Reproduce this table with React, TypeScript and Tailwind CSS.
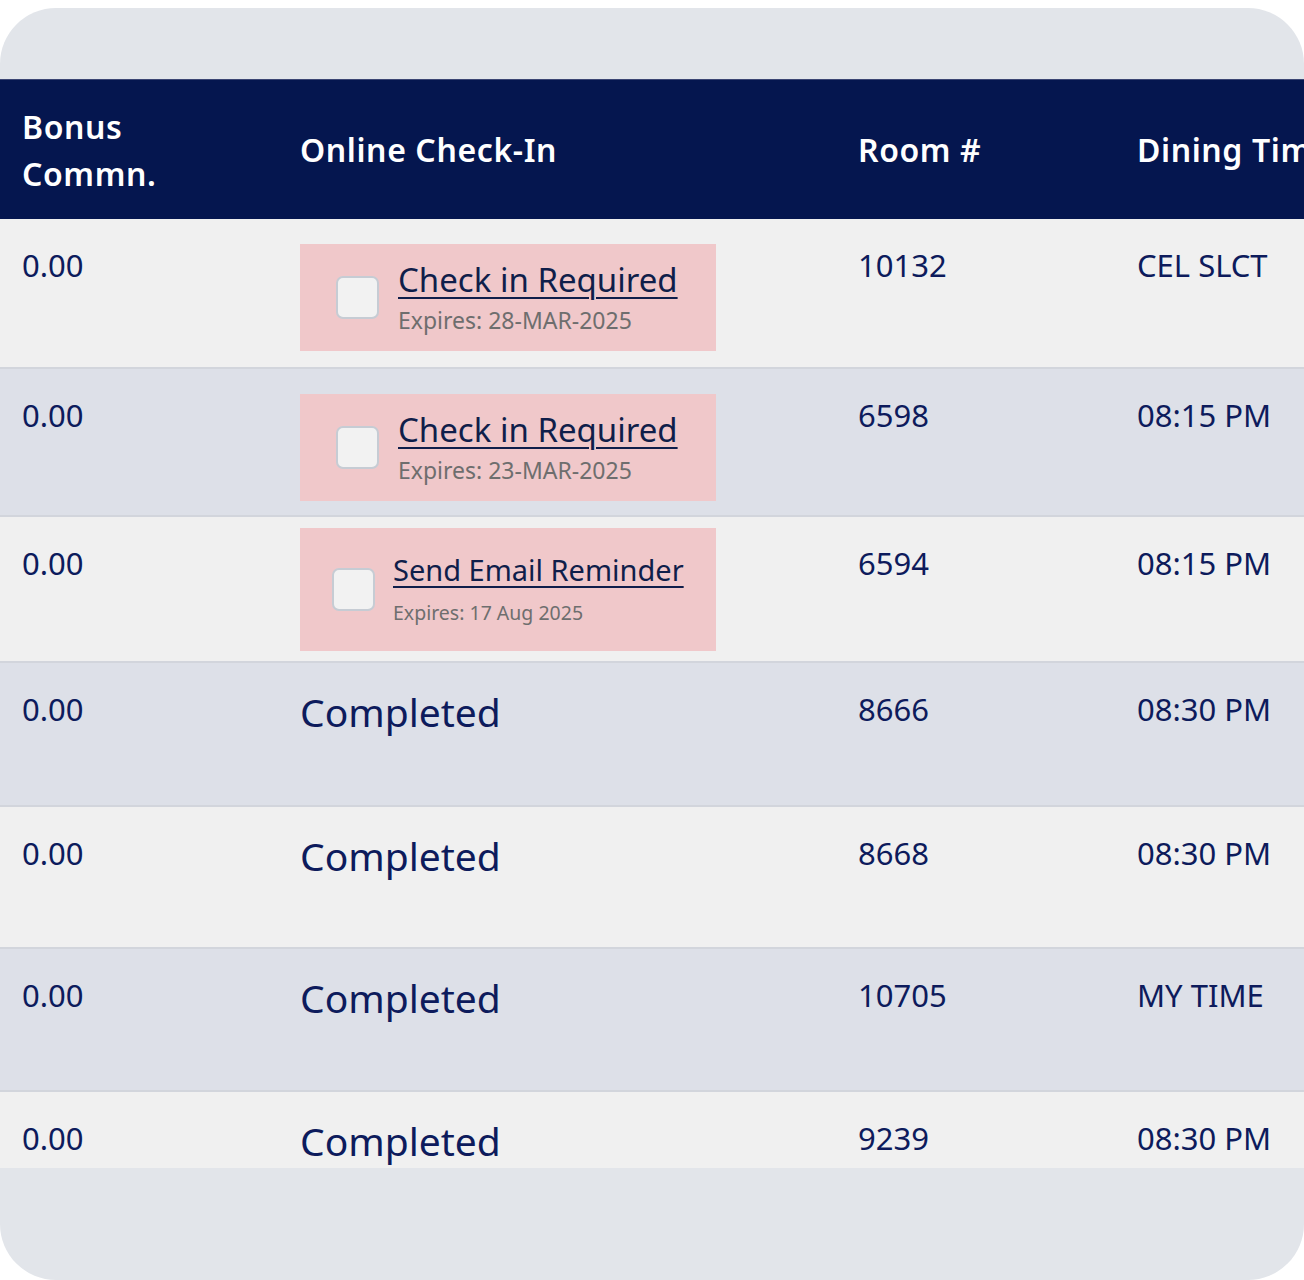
import React from "react";

type Row = {
  bonus: string;
  status:
    | { kind: "required"; expires: string }
    | { kind: "email"; expires: string }
    | { kind: "done" };
  room: string;
  dining: string;
  bg: string;
  h: string;
};

const rows: Row[] = [
  { bonus: "0.00", status: { kind: "required", expires: "Expires: 28-MAR-2025" }, room: "10132", dining: "CEL SLCT", bg: "bg-[#f0f0f0]", h: "h-[150px]" },
  { bonus: "0.00", status: { kind: "required", expires: "Expires: 23-MAR-2025" }, room: "6598", dining: "08:15 PM", bg: "bg-[#dde0e8]", h: "h-[148px]" },
  { bonus: "0.00", status: { kind: "email", expires: "Expires: 17 Aug 2025" }, room: "6594", dining: "08:15 PM", bg: "bg-[#f0f0f0]", h: "h-[146px]" },
  { bonus: "0.00", status: { kind: "done" }, room: "8666", dining: "08:30 PM", bg: "bg-[#dde0e8]", h: "h-[144px]" },
  { bonus: "0.00", status: { kind: "done" }, room: "8668", dining: "08:30 PM", bg: "bg-[#f0f0f0]", h: "h-[142px]" },
  { bonus: "0.00", status: { kind: "done" }, room: "10705", dining: "MY TIME", bg: "bg-[#dde0e8]", h: "h-[143px]" },
  { bonus: "0.00", status: { kind: "done" }, room: "9239", dining: "08:30 PM", bg: "bg-[#f0f0f0]", h: "h-[143px]" },
];

function Checkbox() {
  return (
    <div className="w-[43px] h-[43px] shrink-0 rounded-[7px] border-2 border-[#c6ccd4] bg-[#f2f2f2]" />
  );
}

function Status({ s }: { s: Row["status"] }) {
  if (s.kind === "done") {
    return (
      <div className="pt-[25px] text-[39px] leading-[48px] text-[#0d1b5c]">Completed</div>
    );
  }
  if (s.kind === "required") {
    return (
      <div className="mt-[25px] w-[416px] h-[107px] bg-[#f0c8ca] flex items-center pl-[36px] gap-[19px]">
        <Checkbox />
        <div className="flex flex-col gap-[5px]">
          <a className="text-[33px] leading-[40px] text-[#0f1e4a] underline underline-offset-[5px] decoration-[2px] whitespace-nowrap">
            Check in Required
          </a>
          <span className="text-[23px] leading-[30px] text-[#6e6e6e] whitespace-nowrap">{s.expires}</span>
        </div>
      </div>
    );
  }
  return (
    <div className="mt-[11px] w-[416px] h-[123px] bg-[#f0c8ca] flex items-center pl-[32px] gap-[18px]">
      <Checkbox />
      <div className="flex flex-col gap-[11px]">
        <a className="text-[29px] leading-[36px] text-[#0f1e4a] underline underline-offset-[5px] decoration-[2px] whitespace-nowrap">
          Send Email Reminder
        </a>
        <span className="text-[19.5px] leading-[28px] text-[#6e6e6e] whitespace-nowrap">{s.expires}</span>
      </div>
    </div>
  );
}

export default function App() {
  return (
    <div className="min-h-screen bg-white pt-[8px]" style={{ fontFamily: '"Noto Sans", "DejaVu Sans", sans-serif' }}>
      <div className="h-[1272px] rounded-[56px] bg-[#e2e5ea] overflow-hidden flex flex-col pt-[71px]">
        <div className="h-[1089px] overflow-hidden">
          <div className="w-[1600px]">
            <div className="grid grid-cols-[278px_558px_279px_485px] h-[140px] bg-[#05164f] border-t border-[#3b4573] text-white font-semibold text-[32px] tracking-[0.6px]">
              <div className="pl-[22px] flex items-center leading-[47px]">
                <span>
                  Bonus
                  <br />
                  Commn.
                </span>
              </div>
              <div className="pl-[22px] flex items-center">Online Check-In</div>
              <div className="pl-[22px] flex items-center">Room #</div>
              <div className="pl-[22px] flex items-center whitespace-nowrap">Dining Time</div>
            </div>
            {rows.map((r, i) => (
              <div
                key={i}
                className={`grid grid-cols-[278px_558px_279px_485px] ${r.h} ${r.bg} border-b-2 border-[#d2d5dc] text-[31px] text-[#0d1b5c]`}
              >
                <div className="pl-[22px] pt-[25px] leading-[42px]">{r.bonus}</div>
                <div className="pl-[22px]">
                  <Status s={r.status} />
                </div>
                <div className="pl-[22px] pt-[25px] leading-[42px]">{r.room}</div>
                <div className="pl-[22px] pt-[25px] leading-[42px]">{r.dining}</div>
              </div>
            ))}
          </div>
        </div>
      </div>
    </div>
  );
}
